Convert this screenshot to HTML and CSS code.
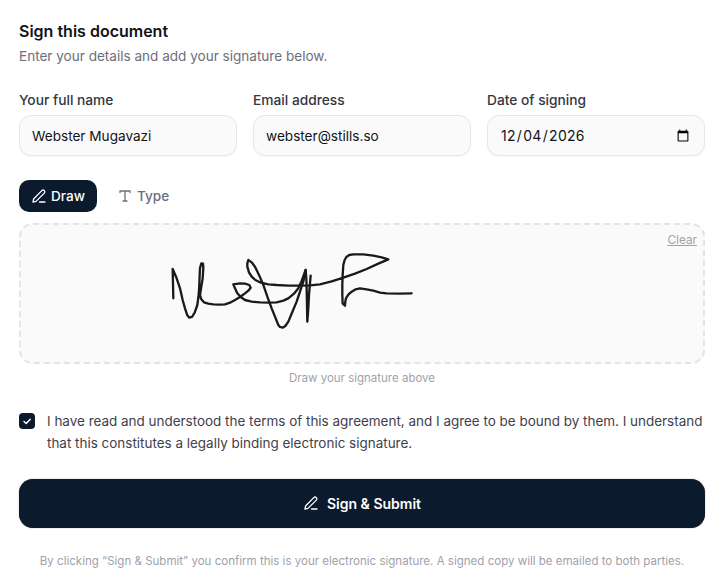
FILE: index.html
```html
<!DOCTYPE html>
<html lang="en">
<head>
    <meta charset="UTF-8">
    <meta name="viewport" content="width=device-width, initial-scale=1.0">
    <title>Sign this document</title>
    <link rel="stylesheet" href="styles.css">
</head>
<body>
    <form class="sign-form">
        <h1 class="title">Sign this document</h1>
        <p class="subtitle">Enter your details and add your signature below.</p>

        <div class="fields">
            <div class="field">
                <label for="fullName">Your full name</label>
                <input id="fullName" type="text" value="Webster Mugavazi">
            </div>
            <div class="field">
                <label for="email">Email address</label>
                <input id="email" type="email" value="webster@stills.so">
            </div>
            <div class="field">
                <label for="signDate">Date of signing</label>
                <input id="signDate" type="date" value="2026-12-04">
            </div>
        </div>

        <div class="tabs">
            <button type="button" class="tab active">
                <svg class="icon" viewBox="0 0 16 16"><path d="M2 14 2.6 11 10.8 2.6a1.7 1.7 0 0 1 2.5 2.5L5 13.4 2 14ZM8.5 14H14"/></svg>
                Draw
            </button>
            <button type="button" class="tab">
                <svg class="icon" viewBox="0 0 16 16"><path d="M3 4.5V3h10v1.5M8 3v10M6 13h4"/></svg>
                Type
            </button>
        </div>

        <div class="sign-pad">
            <a class="clear" href="#">Clear</a>
            <svg class="signature" viewBox="0 0 682 137">
                <g transform="translate(139 20) scale(.3333)">
                    <path d="M40 160 38 72 50 100 60 130 68 165 75 190 82 211 88 218 96 216 104 203 112 180 116 150 118 120 119 90 120 70 124 55 129 56 130 68 128 100 124 125 120 150 124 163 132 172 145 176 160 178 178 179 195 178 210 173 225 165 240 156 255 145 265 137 272 128 268 120 255 116 240 115 220 118 225 130 232 145 243 157 255 165 275 170 300 172 325 173 350 172 370 167 385 160 402 146 415 130 425 108 437 75 439 100 440 130 441 180 442 230 445 190 447 150 450 115 452 92"/>
                    <path d="M437 75 430 110 420 140 410 170 397 201 385 230 376 243 368 248 360 246 355 240 345 215 335 190 322 155 310 120 298 92 285 65 275 52 265 45 262 55 262 65 267 82 275 95 286 105 300 112 325 118 350 120 385 122 420 122 450 121 480 118 515 109 550 98 585 86 620 72 655 56 685 43 665 37 640 32 610 28 580 28 568 30 560 35 554 45 550 60 548 90 547 120 547 150 548 175 555 182 556 170 558 160 565 149 575 140 587 133 600 130 620 133 640 137 660 143 680 145 720 146 755 145"/>
                </g>
            </svg>
        </div>
        <p class="hint">Draw your signature above</p>

        <div class="agree">
            <span class="checkbox">
                <svg viewBox="0 0 16 16"><path d="M5 8.5 7.2 10.6 11.3 6.3"/></svg>
            </span>
            <p>I have read and understood the terms of this agreement, and I agree to be bound by them. I understand that this constitutes a legally binding electronic signature.</p>
        </div>

        <button type="button" class="submit">
            <svg class="icon" viewBox="0 0 16 16"><path d="M2 14 2.6 11 10.8 2.6a1.7 1.7 0 0 1 2.5 2.5L5 13.4 2 14ZM8.5 14H14"/></svg>
            Sign &amp; Submit
        </button>

        <p class="footnote">By clicking “Sign &amp; Submit” you confirm this is your electronic signature. A signed copy will be emailed to both parties.</p>
    </form>
</body>
</html>
```
FILE: styles.css
```css
* {
    box-sizing: border-box;
}

body {
    margin: 0;
    background: #fff;
    color: #0b1a2e;
    font-family: 'Inter', sans-serif;
}

.sign-form {
    padding: 20px 20px 0 19px;
}

.title {
    margin: 0;
    font-size: 16px;
    line-height: 22px;
    font-weight: 600;
    color: #111318;
}

.subtitle {
    margin: 3px 0 0;
    font-size: 13.55px;
    line-height: 22px;
    color: #6d6e7c;
}

/* name, email and date in one row */
.fields {
    display: grid;
    grid-template-columns: repeat(3, 1fr);
    gap: 16px;
    margin-top: 23px;
}

.field label {
    display: block;
    margin-bottom: 5px;
    font-size: 13.75px;
    line-height: 20px;
    font-weight: 500;
    color: #333640;
}

.field input {
    display: block;
    width: 100%;
    height: 41px;
    padding: 0 12px;
    border: 1px solid #e6e6e8;
    border-radius: 12px;
    background: #fafafa;
    font-family: inherit;
    font-size: 13.6px;
    color: #111318;
    outline: none;
    box-shadow: 0 1px 2px rgba(0, 0, 0, 0.03);
}

.field input[type="date"] {
    font-size: 14px;
    letter-spacing: 0.3px;
}

.tabs {
    display: flex;
    gap: 8px;
    margin-top: 24px;
}

.tab {
    display: flex;
    align-items: center;
    gap: 4px;
    height: 32px;
    padding: 0 12px;
    border: none;
    border-radius: 10px;
    background: none;
    font-family: inherit;
    font-size: 13.6px;
    font-weight: 500;
    color: #6d6e7c;
}

.tab.active {
    background: #0c1a2e;
    color: #fff;
}

.icon {
    width: 16px;
    height: 16px;
    fill: none;
    stroke: currentColor;
    stroke-width: 1.3;
    stroke-linecap: round;
    stroke-linejoin: round;
}

.sign-pad {
    position: relative;
    height: 141px;
    margin-top: 11px;
    border: 2px dashed #e4e4e7;
    border-radius: 14px;
    background: #fafafa;
}

.signature {
    display: block;
    width: 100%;
    height: 100%;
    fill: none;
    stroke: #1a1a1a;
    stroke-width: 7;
    stroke-linejoin: round;
    stroke-linecap: round;
}

/* sits over the drawing area */
.clear {
    position: absolute;
    top: 7px;
    right: 6px;
    font-size: 11.8px;
    line-height: 16px;
    color: #a1a1aa;
}

.hint {
    margin: 6px 0 0;
    text-align: center;
    font-size: 11.5px;
    line-height: 16px;
    color: #a1a1aa;
}

.agree {
    display: flex;
    gap: 12px;
    margin-top: 24px;
}

.checkbox {
    flex: none;
    width: 16px;
    height: 16px;
    margin-top: 3px;
    border-radius: 4px;
    background: #0c1a2e;
}

.checkbox svg {
    display: block;
    fill: none;
    stroke: #fff;
    stroke-width: 1.4;
    stroke-linecap: round;
    stroke-linejoin: round;
}

.agree p {
    margin: 0;
    font-size: 13.46px;
    line-height: 22.4px;
    color: #3f414b;
}

.submit {
    display: flex;
    align-items: center;
    justify-content: center;
    gap: 8px;
    width: 100%;
    height: 49px;
    margin-top: 24px;
    border: none;
    border-radius: 14px;
    background: #0c1a2e;
    font-family: inherit;
    font-size: 14px;
    font-weight: 600;
    color: #fff;
    box-shadow: 0 0 1px rgba(12, 26, 46, 0.7);
}

.footnote {
    margin: 25px 0 0;
    text-align: center;
    font-size: 11.54px;
    line-height: 16px;
    color: #a1a1aa;
}
```
